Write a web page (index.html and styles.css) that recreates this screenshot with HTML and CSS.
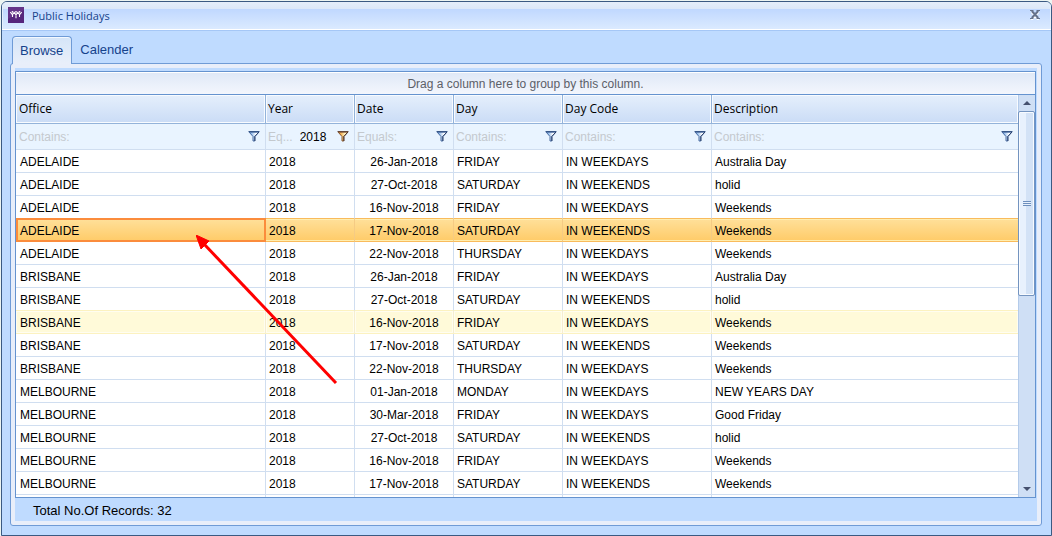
FILE: index.html
```html
<!DOCTYPE html>
<html lang="en">
<head>
<meta charset="utf-8">
<title>Public Holidays</title>
<link rel="stylesheet" href="styles.css">
</head>
<body>
<svg width="0" height="0" class="defs" aria-hidden="true">
  <defs>
    <linearGradient id="blue" x1="0" x2="1" y1="0" y2="0"><stop offset="0.2" stop-color="#8db8ea"/><stop offset="0.7" stop-color="#ffffff"/></linearGradient>
    <linearGradient id="gold" x1="0" x2="1" y1="0" y2="0"><stop offset="0.2" stop-color="#f0a33c"/><stop offset="0.7" stop-color="#fff3c4"/></linearGradient>
    <symbol id="funnel" viewBox="0 0 12 11">
      <path d="M1.2 1.2L5 5.5V10H6.8V5.5L10.8 1.2Z" fill="url(#blue)" stroke="#3b5f96" stroke-width=".9"/>
      <path d="M.5 .6H11.5" stroke="#2b4a7d"/>
      <path d="M10.8 1.2L6.9 5.5V10" fill="none" stroke="#1f3560" stroke-width=".9"/>
    </symbol>
    <symbol id="funnel-on" viewBox="0 0 12 11">
      <path d="M1.2 1.2L5 5.5V10H6.8V5.5L10.8 1.2Z" fill="url(#gold)" stroke="#7a4a24" stroke-width=".9"/>
      <path d="M.5 .6H11.5" stroke="#5a3a2c"/>
      <path d="M10.8 1.2L6.9 5.5V10" fill="none" stroke="#3f2a24" stroke-width=".9"/>
    </symbol>
  </defs>
</svg>
<main class="window">
  <header class="titlebar">
    <svg class="logo" viewBox="0 0 16 16" aria-hidden="true">
      <rect width="16" height="16" fill="#56267c"/>
      <path d="M0 0H16V3L0 12Z" fill="#653489"/>
      <path d="M2.3 5.2L4.4 7.6L6.2 5.4L8 7.8L9.8 5.4L11.6 7.6L13.7 5.2M4.5 7V10M8 7V11.2M11.5 7V10" fill="none" stroke="#fff" stroke-width="1.1"/>
      <g fill="#fff"><circle cx="4.5" cy="4.8" r=".9"/><circle cx="8" cy="4.8" r=".9"/><circle cx="11.5" cy="4.8" r=".9"/></g>
    </svg>
    <h1 class="title">Public Holidays</h1>
    <button class="close" type="button" aria-label="Close">
      <svg width="10" height="10" viewBox="0 0 10 10"><path d="M1.5 2L8.5 10M8.5 2L1.5 10" stroke="#fff" stroke-width="2"/><path d="M1.8 1L8.2 8M8.2 1L1.8 8" stroke="#66738c" stroke-width="2"/><path d="M0 .5H3.5M6.5 .5H10M0 8.5H3.5M6.5 8.5H10" stroke="#66738c"/></svg>
    </button>
  </header>
  <nav class="tabs" role="tablist">
    <button class="tab active" type="button" role="tab" aria-selected="true">Browse</button>
    <button class="tab" type="button" role="tab" aria-selected="false">Calender</button>
  </nav>
  <section class="pane">
    <div class="content">
      <div class="grid">
        <div class="groupbar">Drag a column here to group by this column.</div>
        <div class="gridbody">
          <div class="viewport">
            <table class="table">
              <colgroup><col class="c-office"><col class="c-year"><col class="c-date"><col class="c-day"><col class="c-code"><col></colgroup>
              <thead>
                <tr class="heads"><th>Office</th><th>Year</th><th>Date</th><th>Day</th><th>Day Code</th><th>Description</th></tr>
                <tr class="filters">
                  <td><div class="filter"><input aria-label="Filter Office" placeholder="Contains:"><button type="button" aria-label="Office filter options"><svg><use href="#funnel"/></svg></button></div></td>
                  <td><div class="filter"><label for="year">Eq...</label><input id="year" value="2018"><button type="button" aria-label="Year filter options"><svg><use href="#funnel-on"/></svg></button></div></td>
                  <td><div class="filter"><input aria-label="Filter Date" placeholder="Equals:"><button type="button" aria-label="Date filter options"><svg><use href="#funnel"/></svg></button></div></td>
                  <td><div class="filter"><input aria-label="Filter Day" placeholder="Contains:"><button type="button" aria-label="Day filter options"><svg><use href="#funnel"/></svg></button></div></td>
                  <td><div class="filter"><input aria-label="Filter Day Code" placeholder="Contains:"><button type="button" aria-label="Day Code filter options"><svg><use href="#funnel"/></svg></button></div></td>
                  <td><div class="filter"><input aria-label="Filter Description" placeholder="Contains:"><button type="button" aria-label="Description filter options"><svg><use href="#funnel"/></svg></button></div></td>
                </tr>
              </thead>
              <tbody>
                <tr><td>ADELAIDE</td><td>2018</td><td>26-Jan-2018</td><td>FRIDAY</td><td>IN WEEKDAYS</td><td>Australia Day</td></tr>
                <tr><td>ADELAIDE</td><td>2018</td><td>27-Oct-2018</td><td>SATURDAY</td><td>IN WEEKENDS</td><td>holid</td></tr>
                <tr class="before-selected"><td>ADELAIDE</td><td>2018</td><td>16-Nov-2018</td><td>FRIDAY</td><td>IN WEEKDAYS</td><td>Weekends</td></tr>
                <tr class="selected"><td class="current">ADELAIDE</td><td>2018</td><td>17-Nov-2018</td><td>SATURDAY</td><td>IN WEEKENDS</td><td>Weekends</td></tr>
                <tr><td>ADELAIDE</td><td>2018</td><td>22-Nov-2018</td><td>THURSDAY</td><td>IN WEEKDAYS</td><td>Weekends</td></tr>
                <tr><td>BRISBANE</td><td>2018</td><td>26-Jan-2018</td><td>FRIDAY</td><td>IN WEEKDAYS</td><td>Australia Day</td></tr>
                <tr class="before-hovered"><td>BRISBANE</td><td>2018</td><td>27-Oct-2018</td><td>SATURDAY</td><td>IN WEEKENDS</td><td>holid</td></tr>
                <tr class="hovered"><td>BRISBANE</td><td>2018</td><td>16-Nov-2018</td><td>FRIDAY</td><td>IN WEEKDAYS</td><td>Weekends</td></tr>
                <tr><td>BRISBANE</td><td>2018</td><td>17-Nov-2018</td><td>SATURDAY</td><td>IN WEEKENDS</td><td>Weekends</td></tr>
                <tr><td>BRISBANE</td><td>2018</td><td>22-Nov-2018</td><td>THURSDAY</td><td>IN WEEKDAYS</td><td>Weekends</td></tr>
                <tr><td>MELBOURNE</td><td>2018</td><td>01-Jan-2018</td><td>MONDAY</td><td>IN WEEKDAYS</td><td>NEW YEARS DAY</td></tr>
                <tr><td>MELBOURNE</td><td>2018</td><td>30-Mar-2018</td><td>FRIDAY</td><td>IN WEEKDAYS</td><td>Good Friday</td></tr>
                <tr><td>MELBOURNE</td><td>2018</td><td>27-Oct-2018</td><td>SATURDAY</td><td>IN WEEKENDS</td><td>holid</td></tr>
                <tr><td>MELBOURNE</td><td>2018</td><td>16-Nov-2018</td><td>FRIDAY</td><td>IN WEEKDAYS</td><td>Weekends</td></tr>
                <tr><td>MELBOURNE</td><td>2018</td><td>17-Nov-2018</td><td>SATURDAY</td><td>IN WEEKENDS</td><td>Weekends</td></tr>
                <tr><td></td><td></td><td></td><td></td><td></td><td></td></tr>
              </tbody>
            </table>
          </div>
          <div class="scrollbar">
            <button class="step" type="button" aria-label="Scroll up"><svg width="8" height="4" viewBox="0 0 8 4"><path d="M0 4L4 0L8 4Z" fill="#45506e"/></svg></button>
            <div class="track"><div class="thumb"><span class="grip"></span></div></div>
            <button class="step" type="button" aria-label="Scroll down"><svg width="8" height="4" viewBox="0 0 8 4"><path d="M0 0H8L4 4Z" fill="#45506e"/></svg></button>
          </div>
        </div>
      </div>
      <footer class="total">Total No.Of Records: 32</footer>
    </div>
  </section>
  <svg class="pointer" viewBox="0 0 142 150" aria-hidden="true"><path d="M8 9L140 148" stroke="#f00" stroke-width="3"/><path d="M0 0L13 6L10 9L5 14Z" fill="#f00" stroke="#f00" stroke-width="1"/></svg>
</main>
</body>
</html>
```
FILE: styles.css
```css
* { box-sizing: border-box; }
body {
  margin: 0;
  background: #edf5f2;
  color: #000;
  font: 12px/16px "Liberation Sans", Arial, sans-serif;
}
button, input { font: inherit; color: inherit; border: 0; padding: 0; background: none; }
.defs { position: absolute; }

.window {
  position: relative;
  display: flex;
  flex-direction: column;
  height: calc(100vh - 1px);
  margin: 1px 0 0 1px;
  border: 1px solid #3b5a82;
  border-radius: 6px 6px 0 0;
  background: #bfdbff;
  overflow: hidden;
}
.titlebar {
  display: flex;
  align-items: center;
  flex: none;
  height: 29px;
  padding: 0 11px 2px 6px;
  border-bottom: 1px solid #a5c7f6;
  box-shadow: inset 0 -1px #fff, inset 1px 0 #e6f0fc, inset -1px 0 #e6f0fc;
  background: linear-gradient(#e5eefa 0, #dce8f8 7px, #c0d8ff 7px, #dcebff 28px);
}
.logo { width: 16px; height: 16px; }
.title {
  flex: 1;
  margin: 2px 0 0 8px;
  color: #15428b;
  font: 11px/16px "Open Sans", "Noto Sans", sans-serif;
}
.close { display: flex; }

.tabs { display: flex; flex: none; height: 32px; padding: 5px 10px 0; }
.tab {
  padding: 0 8px 0 7px;
  border: 1px solid transparent;
  border-bottom: 0;
  color: #15428b;
  font-size: 13px;
}
.tab.active {
  z-index: 1;
  margin-bottom: -1px;
  border-color: #6f9bd6;
  border-radius: 4px 4px 0 0;
  background: linear-gradient(#d5e5f8, #e9effa);
  box-shadow: inset 0 1px #f4f9ff;
}
.pane {
  display: flex;
  flex: 1;
  min-height: 0;
  margin: 0 9px 9px 8px;
  padding: 4px;
  border: 1px solid #6f9bd6;
  border-radius: 3px;
  background: #e8eefa;
}
.content {
  display: flex;
  flex: 1;
  flex-direction: column;
  min-width: 0;
  padding: 3px 1px 0 0;
  background: #bfdbff;
}
.grid {
  display: flex;
  flex: 1;
  flex-direction: column;
  min-height: 0;
  border: 1px solid #6593cf;
  background: #fff;
}
.groupbar {
  flex: none;
  height: 22px;
  border-top: 1px solid #fff;
  background: linear-gradient(#e0e9f7, #f3f6fd);
  color: #5c6068;
  font-size: 12px;
  line-height: 22px;
  text-align: center;
}
.gridbody { display: flex; flex: 1; min-height: 0; border-top: 1px solid #6593cf; }
.viewport { flex: 1; min-width: 0; overflow: hidden; }

.table { width: 100%; table-layout: fixed; border-collapse: separate; border-spacing: 0; }
.c-office { width: 250px; }
.c-year { width: 89px; }
.c-date { width: 99px; }
.c-day { width: 109px; }
.c-code { width: 149px; }
.table th {
  height: 29px;
  padding: 0 2px;
  border-right: 1px solid #93b3da;
  border-bottom: 1px solid #93b3da;
  box-shadow: inset 1px 1px #f8fbff, inset -1px -1px #f8fbff;
  background: linear-gradient(#e5effc, #cadcf6);
  font: 12px/16px "Open Sans", "Noto Sans", sans-serif;
  text-align: left;
}
.table td {
  height: 23px;
  padding: 1px 3px 0;
  border-right: 1px solid #d0def0;
  border-bottom: 1px solid #d0def0;
}
.table th:first-child { padding-left: 3px; }
.table td:first-child { padding-left: 4px; }
.table th:last-child, .table td:last-child { border-right: 0; }
.table tbody td:nth-child(3) { text-align: center; padding: 1px 0 0; }
.table .filters td { height: 26px; padding: 0 5px 0 2px; background: #e9f4ff; }
.table .filters td:first-child { padding-left: 3px; }
.filter { display: flex; align-items: center; gap: 4px; }
.filter label { flex: none; margin-right: 3px; color: #c4c9ce; }
.filter input { flex: 1; min-width: 0; outline: 0; }
.filter input::placeholder { color: #c4c9ce; opacity: 1; }
.filter button { display: flex; flex: none; }
.filter svg { width: 12px; height: 11px; }
.before-selected td { border-bottom-color: #f9bb5c; }
.table .selected td {
  border-right-color: #f5cb84;
  border-bottom-color: #f9bb5c;
  background: linear-gradient(#ffe09a, #ffcb68);
  box-shadow: inset 0 1px #ffeeb0, inset 0 -1px #ffeeb0;
}
.table .selected .current {
  border-color: #fb8c3c;
  box-shadow: inset 1px 0 #fb8c3c, inset 2px 1px #fb8c3c, inset -1px -1px #fb8c3c, 0 -1px #fb8c3c;
}
.before-hovered td { border-bottom-color: #fcf2c0; }
.table .hovered td {
  border-right-color: #f6eecf;
  border-bottom-color: #fcf2c0;
  background: #fffad9;
  box-shadow: inset 1px 1px #fffdf0, inset -1px -1px #fffdf0;
}

.scrollbar {
  display: flex;
  flex: none;
  flex-direction: column;
  width: 17px;
  border-left: 1px solid #b4cbea;
  background: #cfdff5;
}
.step { display: flex; align-items: center; justify-content: center; height: 16px; }
.track { flex: 1; min-height: 0; }
.thumb {
  display: flex;
  align-items: center;
  justify-content: center;
  height: 50%;
  margin-left: -1px;
  border: 1px solid #7494c0;
  border-radius: 2px;
  box-shadow: inset 0 0 0 1px #f8fbff;
  background: linear-gradient(90deg, #e8f1fd 45%, #d3e2f6 45%);
}
.grip { width: 8px; height: 5px; background: repeating-linear-gradient(#6d8fbd 0 1px, #e8f1fd 1px 2px); }
.total { flex: none; padding: 5px 18px 2px; font-size: 13px; }
.pointer { position: absolute; left: 194px; top: 233px; width: 142px; height: 150px; pointer-events: none; }
```
